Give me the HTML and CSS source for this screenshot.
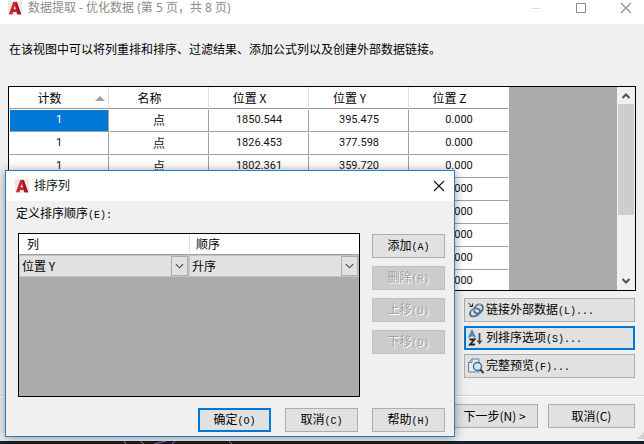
FILE: index.html
```html
<!DOCTYPE html>
<html lang="zh-CN">
<head>
<meta charset="utf-8">
<title>数据提取</title>
<link rel="stylesheet" href="styles.css">
</head>
<body>
<svg width="0" height="0" class="defs" aria-hidden="true">
  <symbol id="logo" viewBox="0 0 16 16">
    <rect width="16" height="16" fill="#f7e4e2"/>
    <path d="M1 15 6 1h4l5 14h-4.500l-.8-2.500H6L5 15z" fill="#c32a30"/>
    <path d="M8.500 1H10l5 14h-4z" fill="#9c1720"/>
    <path d="M7.800 5.500 9 9.500H6.500z" fill="#f7e4e2"/>
  </symbol>
  <symbol id="close" viewBox="0 0 12 12"><path d="M1 1 11 11M11 1 1 11" fill="none" stroke="currentColor" stroke-width="1.100"/></symbol>
</svg>
<main class="window">
  <header class="titlebar">
    <svg class="logo"><use href="#logo"/></svg>
    <h1>数据提取 - 优化数据 (第 5 页，共 8 页)</h1>
    <button class="caption" aria-label="最小化"><svg viewBox="0 0 12 12"><path d="M1 6.500h10" stroke="#e2e2e2"/></svg></button>
    <button class="caption" aria-label="最大化"><svg viewBox="0 0 12 12"><path d="M1.500 1.500h9v9h-9z" fill="none" stroke="#8c8c8c"/></svg></button>
    <button class="caption" aria-label="关闭"><svg><use href="#close"/></svg></button>
  </header>
  <p class="message">在该视图中可以将列重排和排序、过滤结果、添加公式列以及创建外部数据链接。</p>
  <section class="grid-box">
    <div class="grid-scroll">
      <table class="data">
        <thead><tr><th>计数<svg class="sort" viewBox="0 0 10 5"><path d="M0 5 5 0l5 5z" fill="#a0a0a0"/></svg></th><th>名称</th><th>位置 X</th><th>位置 Y</th><th>位置 Z</th></tr></thead>
        <tbody>
          <tr><td class="selected">1</td><td class="name">点</td><td>1850.544</td><td>395.475</td><td>0.000</td></tr>
          <tr><td>1</td><td class="name">点</td><td>1826.453</td><td>377.598</td><td>0.000</td></tr>
          <tr><td>1</td><td class="name">点</td><td>1802.361</td><td>359.720</td><td>0.000</td></tr>
          <tr><td></td><td></td><td></td><td></td><td>0.000</td></tr>
          <tr><td></td><td></td><td></td><td></td><td>0.000</td></tr>
          <tr><td></td><td></td><td></td><td></td><td>0.000</td></tr>
          <tr><td></td><td></td><td></td><td></td><td>0.000</td></tr>
          <tr><td></td><td></td><td></td><td></td><td>0.000</td></tr>
        </tbody>
      </table>
    </div>
    <div class="scrollbar">
      <svg viewBox="0 0 16 16"><path d="M4.500 10 8 6.500l3.500 3.500" fill="none" stroke="#505050" stroke-width="2"/></svg>
      <div class="thumb"></div>
      <svg viewBox="0 0 16 16"><path d="M4.500 6 8 9.500 11.500 6" fill="none" stroke="#505050" stroke-width="2"/></svg>
    </div>
  </section>
  <div class="options">
    <button class="btn option"><svg viewBox="0 0 16 16"><path d="M.5 1 4 4.500M4.500 1.500v3h-3" fill="none" stroke="#222"/><g fill="none" stroke="#4e7196" stroke-width="2"><ellipse cx="10.500" cy="7" rx="5" ry="3.800" transform="rotate(-50 10.500 7)"/><ellipse cx="7" cy="10.500" rx="5.300" ry="3.400" transform="rotate(-25 7 10.500)"/></g><path d="M3 10c1-2 4-3 6-2M8 6c0-2 3-4 5-3" fill="none" stroke="#a9c6e0"/></svg><span>链接外部数据<span class="mono">(L)...</span></span></button>
    <button class="btn option default"><svg viewBox="0 0 16 16"><path d="M1 7.500 4 1l3 6.500M2 5.500h4" fill="none" stroke="#4f86b8" stroke-width="1.800"/><path d="M1.500 9.500h5L2 14.500h5" fill="none" stroke="#222" stroke-width="1.800"/><path d="M11.500 3v9" stroke="#35536f" stroke-width="1.800"/><path d="M8.500 10.500h6L11.500 14.500z" fill="#35536f"/></svg><span>列排序选项<span class="mono">(S)...</span></span></button>
    <button class="btn option"><svg viewBox="0 0 16 16"><path d="M.5 4.500 4 1h7v13H.500z" fill="#dcebf5" stroke="#5b86aa"/><path d="M.5 4.500H4V1" fill="none" stroke="#5b86aa"/><circle cx="9.500" cy="8.500" r="4" fill="#d5e9f5" stroke="#426b90" stroke-width="1.400"/><path d="m12.300 11.500 3.200 3.500" stroke="#243b55" stroke-width="2"/></svg><span>完整预览<span class="mono">(F)...</span></span></button>
  </div>
  <footer class="footer">
    <button class="btn wide">下一步(N) &gt;</button>
    <button class="btn wide">取消(C)</button>
  </footer>
  <svg class="grip" viewBox="0 0 8 8"><path d="M6 0h2v2H6zM3 3h2v2H3zM6 3h2v2H6zM0 6h2v2H0zM3 6h2v2H3zM6 6h2v2H6z" fill="#b8b8b8"/></svg>
</main>
<div class="desktop"><svg viewBox="0 0 644 3" preserveAspectRatio="none"><path d="M124 0l2 3M140 0l4 3M154 3l12-3M172 3l3-3M229 0l3 3" fill="none" stroke="#7186b5"/></svg></div>

<div class="dialog" role="dialog" aria-labelledby="dialog-title">
  <header class="titlebar dialog-bar">
    <svg class="logo"><use href="#logo"/></svg>
    <h2 id="dialog-title">排序列</h2>
    <button class="caption" aria-label="关闭"><svg><use href="#close"/></svg></button>
  </header>
  <div class="dialog-body">
    <p class="label" id="order-label">定义排序顺序<span class="mono">(E):</span></p>
    <div class="editor">
      <div class="order-box">
        <table class="order" aria-labelledby="order-label">
          <thead><tr><th>列</th><th>顺序</th></tr></thead>
          <tbody><tr>
            <td><div class="pick"><select aria-label="列"><option>位置 Y</option></select><svg viewBox="0 0 16 20"><path d="m4 8 4 4 4-4" fill="none" stroke="#444" stroke-width="1.200"/></svg></div></td>
            <td><div class="pick"><select aria-label="顺序"><option>升序</option></select><svg viewBox="0 0 16 20"><path d="m4 8 4 4 4-4" fill="none" stroke="#444" stroke-width="1.200"/></svg></div></td>
          </tr></tbody>
        </table>
      </div>
      <div class="side">
        <button class="btn">添加<span class="mono">(A)</span></button>
        <button class="btn" disabled>删除<span class="mono">(R)</span></button>
        <button class="btn" disabled>上移<span class="mono">(U)</span></button>
        <button class="btn" disabled>下移<span class="mono">(D)</span></button>
      </div>
    </div>
    <div class="actions">
      <button class="btn default">确定<span class="mono">(O)</span></button>
      <button class="btn">取消<span class="mono">(C)</span></button>
      <button class="btn">帮助<span class="mono">(H)</span></button>
    </div>
  </div>
</div>
</body>
</html>
```
FILE: styles.css
```css
* { box-sizing: border-box; }
body {
  margin: 0;
  min-height: 100vh;
  display: flex;
  flex-direction: column;
  position: relative;
  overflow: hidden;
  background: #18202b;
  color: #000;
  font: 12px/16px "Noto Sans CJK SC", sans-serif;
}
button, select { font: inherit; color: inherit; }
h1, h2, p { margin: 0; font-size: 12px; font-weight: 400; }
.defs { position: absolute; }
.mono { font-family: "Liberation Mono", monospace; font-size: 10px; }

.window {
  flex: 1;
  display: flex;
  flex-direction: column;
  position: relative;
  background: #f0f0f0;
}
.titlebar {
  display: flex;
  align-items: center;
  height: 24px;
  padding: 0 12px 8px 8px;
  background: #fff;
  color: #8c8c8c;
  font-family: "Noto Sans", "Noto Sans CJK SC", sans-serif;
}
.logo { width: 14px; height: 14px; margin-right: 6px; }
.titlebar h1, .titlebar h2 { flex: 1; }
.caption {
  width: 12px;
  height: 12px;
  margin-left: 33px;
  padding: 0;
  border: 0;
  background: none;
}
.caption svg { display: block; width: 12px; height: 12px; }
.message { padding: 17px 9px 29px; }

.grid-box {
  display: flex;
  height: 205px;
  margin: 0 8px;
  border: 1px solid #000;
  background: #ababab;
}
.grid-scroll { flex: 1; overflow: hidden; }
table { border-collapse: separate; border-spacing: 0; table-layout: fixed; }
th, td { padding: 0; font-weight: 400; }
.data { width: 500px; background: #fff; }
.data th {
  position: relative;
  height: 22px;
  padding-right: 18px;
  border-right: 1px solid #e0e0e0;
  border-bottom: 1px solid #999;
}
.data td {
  height: 23px;
  padding-bottom: 1px;
  border: 1px solid #fff;
  border-right-color: #a0a0a0;
  border-bottom-color: #a0a0a0;
  text-align: center;
  font-family: Roboto, sans-serif;
  font-size: 11px;
  color: #111;
}
.data .name { font-family: "Noto Sans CJK SC", sans-serif; font-size: 12px; }
.data th:last-child, .data td:last-child { border-right-color: #fff; }
.data .selected { background: #0078d7; background-clip: padding-box; color: #fff; }
.sort { position: absolute; right: 3px; top: 9px; width: 10px; height: 5px; }
.scrollbar {
  display: flex;
  flex-direction: column;
  width: 18px;
  padding: 1px;
  background: #f0f0f0;
}
.scrollbar svg { width: 16px; height: 16px; }
.thumb { height: 111px; margin-bottom: auto; background: #cdcdcd; }

.btn {
  height: 24px;
  width: 73px;
  padding: 0;
  border: 1px solid #adadad;
  background: #e1e1e1;
  line-height: 16px;
  white-space: nowrap;
}
.btn.default { border: 2px solid #0078d7; }
.btn:disabled {
  border-color: #bfbfbf;
  background: #ccc;
  color: #a0a0a0;
  text-shadow: 1px 1px #fff;
}
.options {
  display: flex;
  flex-direction: column;
  align-items: flex-end;
  gap: 4px;
  padding: 7px 9px 17px;
}
.option {
  display: flex;
  align-items: center;
  width: 171px;
  padding-left: 3px;
}
.option.default { padding-left: 2px; }
.option svg { width: 16px; height: 16px; margin-right: 2px; }
.footer {
  display: flex;
  justify-content: flex-end;
  gap: 10px;
  padding: 8px 9px 12px;
  border-top: 1px solid #d8d8d8;
  box-shadow: inset 0 1px #fff;
}
.btn.wide { width: 87px; }
.grip { position: absolute; right: 0; bottom: 2px; width: 6px; height: 6px; }
.desktop { height: 3px; background: #18202b; }
.desktop svg { display: block; width: 100%; height: 3px; }

.dialog {
  position: absolute;
  left: 5px;
  top: 170px;
  width: 450px;
  border: 1px solid #1f7fc9;
  background: #f0f0f0;
  box-shadow: 0 1px 10px rgba(0, 0, 0, 0.4);
}
.dialog-bar { height: 30px; padding: 0 9px; color: #111; }
.dialog-bar .logo { margin-right: 5px; }
.dialog-body { padding: 4px 9px 4px 12px; }
.label { margin: 0 0 9px -2px; }
.editor { display: flex; gap: 12px; }
.order-box {
  flex: 1;
  height: 164px;
  border: 1px solid #000;
  background: #ababab;
}
.order { width: 100%; }
.order th {
  height: 21px;
  padding-left: 8px;
  background: #fff;
  border-bottom: 1px solid #a0a0a0;
  text-align: left;
}
.order th + th { border-left: 1px solid #e0e0e0; padding-left: 6px; }
.pick { display: flex; position: relative; border: 1px solid #c4c4c4; }
.pick select {
  appearance: none;
  width: 100%;
  height: 20px;
  padding: 0 18px 0 2px;
  border: 0;
  border-radius: 0;
  background: #e1e1e1;
}
.pick svg {
  position: absolute;
  right: 0;
  top: 0;
  width: 17px;
  height: 20px;
  border: 1px solid #adadad;
  pointer-events: none;
}
.side { display: flex; flex-direction: column; gap: 8px; padding-top: 1px; }
.actions { display: flex; justify-content: flex-end; gap: 14px; padding-top: 11px; }
```
